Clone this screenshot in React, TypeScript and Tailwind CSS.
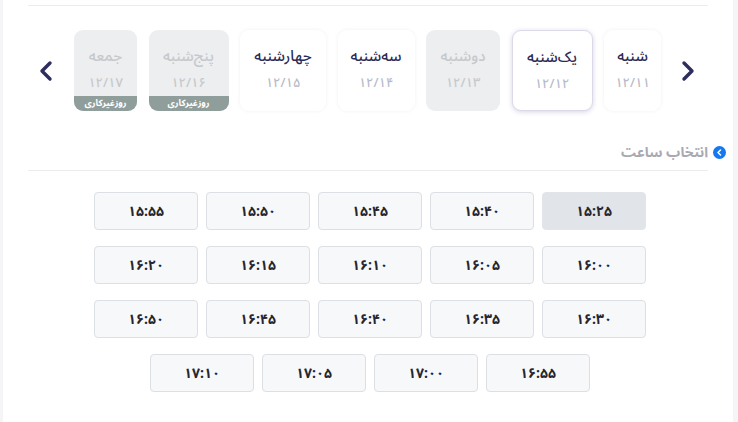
import React from "react";

const font = { fontFamily: "'Noto Sans Arabic', 'Vazirmatn', 'DejaVu Sans', sans-serif" };

type Day = { name: string; date: string; w: string; kind: "white" | "selected" | "gray" | "off" };

const days: Day[] = [
  { name: "شنبه", date: "۱۲/۱۱", w: "w-[57px]", kind: "white" },
  { name: "یک‌شنبه", date: "۱۲/۱۲", w: "w-[81px]", kind: "selected" },
  { name: "دوشنبه", date: "۱۲/۱۳", w: "w-[74px]", kind: "gray" },
  { name: "سه‌شنبه", date: "۱۲/۱۴", w: "w-[77px]", kind: "white" },
  { name: "چهارشنبه", date: "۱۲/۱۵", w: "w-[86px]", kind: "white" },
  { name: "پنج‌شنبه", date: "۱۲/۱۶", w: "w-[80px]", kind: "off" },
  { name: "جمعه", date: "۱۲/۱۷", w: "w-[63px]", kind: "off" },
];

const times = [
  "۱۵:۲۵", "۱۵:۴۰", "۱۵:۴۵", "۱۵:۵۰", "۱۵:۵۵",
  "۱۶:۰۰", "۱۶:۰۵", "۱۶:۱۰", "۱۶:۱۵", "۱۶:۲۰",
  "۱۶:۳۰", "۱۶:۳۵", "۱۶:۴۰", "۱۶:۴۵", "۱۶:۵۰",
  "۱۶:۵۵", "۱۷:۰۰", "۱۷:۰۵", "۱۷:۱۰",
];

function Chevron({ dir }: { dir: "left" | "right" }) {
  return (
    <svg width="14" height="22" viewBox="0 0 14 22" fill="none">
      <polyline
        points={dir === "right" ? "3,3 11,11 3,19" : "11,3 3,11 11,19"}
        stroke="#2f2d5e"
        strokeWidth="3.4"
        strokeLinecap="round"
        strokeLinejoin="round"
      />
    </svg>
  );
}

function DayCard({ d }: { d: Day }) {
  const base = `${d.w} h-[81px] rounded-[9px] flex flex-col items-center relative overflow-hidden shrink-0`;
  let cls = "";
  let nameCls = "text-[#2d2b55]";
  let dateCls = "text-[#b9bac8]";
  if (d.kind === "white") cls = "bg-white shadow-[0_0_4px_rgba(0,0,0,0.06)]";
  if (d.kind === "selected") cls = "bg-white border border-[#dcd9ea] shadow-[0_1px_5px_rgba(70,60,130,0.22)]";
  if (d.kind === "gray" || d.kind === "off") {
    cls = "bg-[#eceeef]";
    nameCls = "text-[#c6c8cc]";
    dateCls = "text-[#c6c8cc]";
  }
  return (
    <div className={`${base} ${cls}`}>
      <div className={`mt-[16px] h-[20px] text-[15px] font-medium leading-[20px] whitespace-nowrap ${nameCls}`}>{d.name}</div>
      <div className={`mt-[9px] h-[16px] text-[13px] font-medium leading-[16px] ${dateCls}`}>{d.date}</div>
      {d.kind === "off" && (
        <div className="absolute bottom-0 left-0 right-0 h-[15px] bg-[#8f9e9b] text-white text-[9px] leading-[12px] flex items-center justify-center font-bold whitespace-nowrap">
          روزغیرکاری
        </div>
      )}
    </div>
  );
}

export default function App() {
  return (
    <div dir="rtl" style={font} className="w-[738px] h-[422px] bg-[#f5f5f7] flex pl-[3px] pr-[5px] overflow-hidden">
      <div className="flex-1 bg-white flex flex-col">
        <div className="mx-[25px] mt-[5px] border-t border-[#ececee]" />
        <div className="flex items-center mt-[24px] pr-[38px]">
          <div className="w-[14px] h-[22px] flex items-center justify-center ml-[20px]">
            <Chevron dir="right" />
          </div>
          <div className="flex gap-[11.5px]">
            {days.map((d) => (
              <DayCard key={d.name} d={d} />
            ))}
          </div>
          <div className="w-[14px] h-[22px] flex items-center justify-center mr-[21px]">
            <Chevron dir="left" />
          </div>
        </div>
        <div className="flex items-center mt-[30px] pr-[7px] h-[22px]">
          <div className="w-[13px] h-[13px] rounded-full bg-[#1479f0] flex items-center justify-center">
            <svg width="7" height="7" viewBox="0 0 7 7" fill="none">
              <polyline points="4.5,1 2,3.5 4.5,6" stroke="white" strokeWidth="1.5" strokeLinecap="round" strokeLinejoin="round" />
            </svg>
          </div>
          <div className="mr-[5px] text-[14px] font-bold text-[#a9a9b2]">انتخاب ساعت</div>
        </div>
        <div className="mx-[25px] mt-[7px] border-t border-[#ececee]" />
        <div className="mt-[21px] flex justify-center pl-[4px]">
          <div className="w-[552px] flex flex-wrap justify-center gap-x-[8px] gap-y-[16px]">
            {times.map((t, i) => (
              <div
                key={t}
                className={`w-[104px] h-[38px] rounded-[4px] border flex items-center justify-center text-[14px] font-bold text-[#262630] ${
                  i === 0 ? "bg-[#e1e4e8] border-[#e1e4e8]" : "bg-[#f7f8fa] border-[#dcdfe3]"
                }`}
              >
                {t}
              </div>
            ))}
          </div>
        </div>
      </div>
    </div>
  );
}
